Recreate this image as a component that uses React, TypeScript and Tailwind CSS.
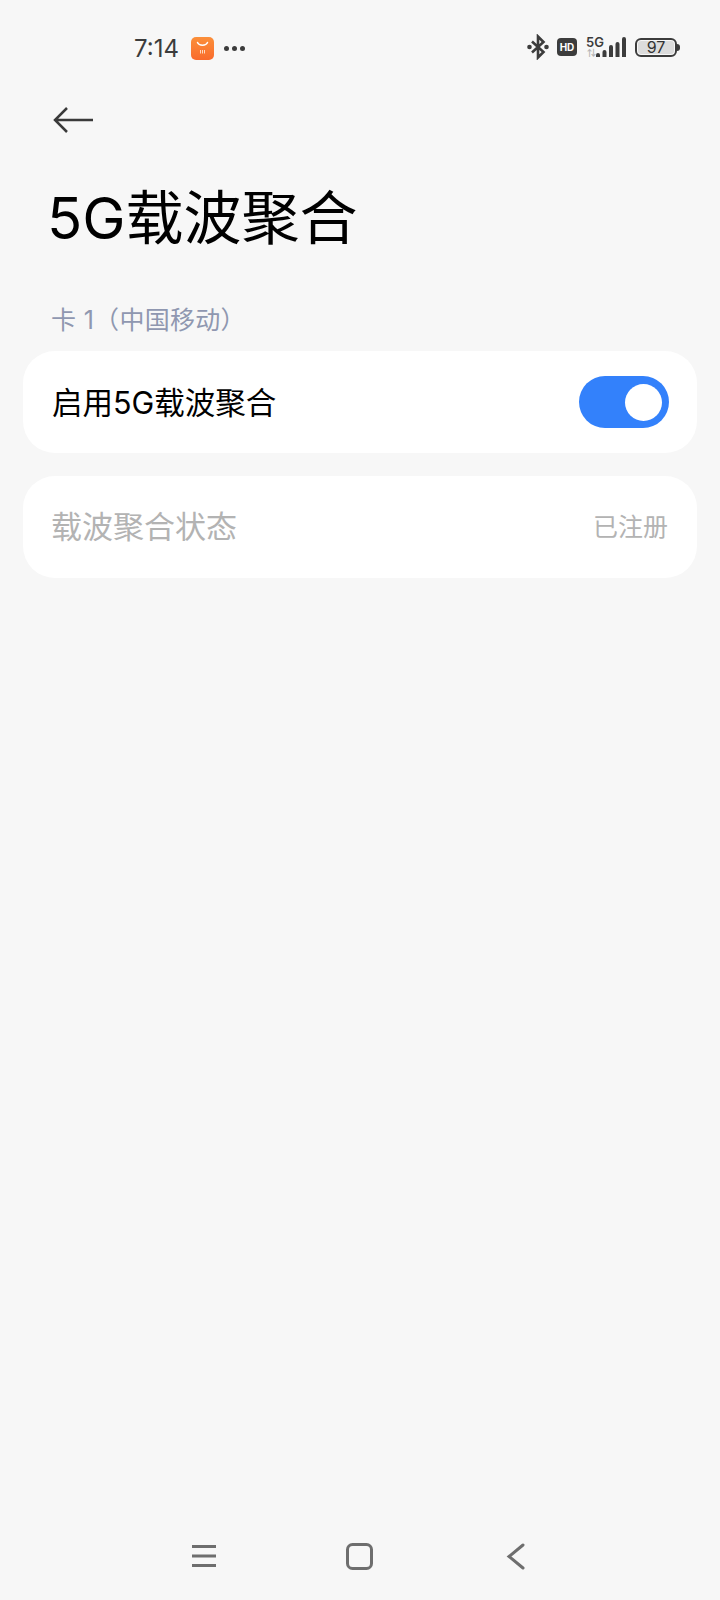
const AppIcon = () => (
  <div className="w-[23px] h-[23px] rounded-[5px] bg-gradient-to-b from-[#fb8f3a] to-[#f96a2c] flex flex-col items-center">
    <svg width="23" height="23" viewBox="0 0 23 23" fill="none">
      <path d="M6.5 5.5C8 9 15 9 16.5 5.5" stroke="#fff" strokeWidth="1.500" strokeLinecap="round" />
      <path d="M9.500 13v3.500M11.500 13v3.500M13.500 13v3.500" stroke="#ffe3cf" strokeWidth="0.900" />
    </svg>
  </div>
);

const StatusIcons = () => (
  <div className="flex items-center">
    <svg width="22" height="26" viewBox="0 0 22 26" fill="none" className="mr-[8px]">
      <path d="M5 7.500 16.500 18 11 23.500V2.500L16.500 8 5 18.500" stroke="#3c3c3c" strokeWidth="2.600" />
      <circle cx="2.500" cy="13" r="2.300" fill="#3c3c3c" />
      <circle cx="19.500" cy="13" r="2.300" fill="#3c3c3c" />
    </svg>
    <div className="w-[20px] h-[18px] rounded-[4px] bg-[#3c3c3c] text-white text-[10px] font-bold leading-[18px] text-center mr-[10px]">
      HD
    </div>
    <div className="relative w-[40px] h-[20px] mr-[8px]">
      <span className="absolute left-[-1px] top-[-2px] text-[13px] font-semibold leading-[14px] text-[#3c3c3c]">5G</span>
      <span className="absolute left-[0px] top-[11px] text-[9px] font-bold leading-[10px] text-[#b5b5b5]">⇅</span>
      <svg width="40" height="20" viewBox="0 0 40 20" className="absolute inset-0">
        <path d="M9 20v-2a1.500 1.500 0 0 1 4 0v2zM15.500 20v-5a2 2 0 0 1 4 0v5zM22 20V10a2 2 0 0 1 4 0v10zM28.500 20V7a2 2 0 0 1 4 0v13zM35 20V2a2 2 0 0 1 4 0v18z" fill="#3c3c3c" />
      </svg>
    </div>
    <div className="w-[42px] h-[19px] rounded-[6px] border-2 border-[#3c3c3c] p-px">
      <div className="w-[36px] h-[13px] rounded-[3px] bg-[#dcdcdc] text-[16px] leading-[13px] text-center text-[#333]">97</div>
    </div>
    <div className="w-[3px] h-[7px] rounded-r-sm bg-[#3c3c3c]" />
  </div>
);

const App = () => {
  return (
    <div
      className="w-[720px] h-[1600px] bg-[#f7f7f7] flex flex-col overflow-hidden"
      style={{ fontFamily: 'Inter, "Noto Sans CJK SC", sans-serif' }}
    >
      <header className="h-[106px] pl-[134px] pr-[40px] pt-[34px] flex items-start justify-between">
        <div className="flex items-center h-[28px]">
          <span className="w-[46px] text-[24px] leading-[28px] mt-[1px] text-[#3c3c3c]">7:14</span>
          <div className="ml-[11px]">
            <AppIcon />
          </div>
          <div className="flex items-center gap-[3px] ml-[10px]">
            <span className="w-[5px] h-[5px] rounded-full bg-[#3c3c3c]" />
            <span className="w-[5px] h-[5px] rounded-full bg-[#3c3c3c]" />
            <span className="w-[5px] h-[5px] rounded-full bg-[#3c3c3c]" />
          </div>
        </div>
        <StatusIcons />
      </header>

      <div className="pl-[53px]">
        <svg width="41" height="28" viewBox="0 0 41 28" fill="none" className="block">
          <path d="M40 14H2M14 2 2 14l12 12" stroke="#3a3a3a" strokeWidth="2.500" />
        </svg>
      </div>

      <h1 className="mt-[49px] pl-[47px] text-[58px] leading-[70px] font-normal text-black">5G载波聚合</h1>

      <p className="mt-[51px] pl-[51px] text-[25px] leading-[32px] tracking-[0.3px] text-[#8f97b0]">卡 1（中国移动）</p>

      <main className="mt-[15px] px-[23px] flex flex-col gap-[23px]">
        <div className="h-[102px] rounded-[32px] bg-white pl-[29px] pr-[28px] flex items-center justify-between">
          <span className="text-[30.500px] text-black pt-[1px]">启用5G载波聚合</span>
          <div className="w-[90px] h-[52px] rounded-full bg-[#3381fb] flex items-center justify-end pr-[7px]">
            <div className="w-[37px] h-[37px] rounded-full bg-white" />
          </div>
        </div>
        <div className="h-[102px] rounded-[32px] bg-white pl-[28px] pr-[29px] flex items-center justify-between">
          <span className="text-[31px] text-[#b3b3b3] pt-[1px]">载波聚合状态</span>
          <span className="text-[25px] text-[#b3b3b3] pt-[1px]">已注册</span>
        </div>
      </main>

      <nav className="mt-auto h-[57px] pb-[31px] flex items-start">
        <div className="ml-[191px] flex items-start">
          <svg width="26" height="26" viewBox="0 0 26 26" fill="none">
            <path d="M1 3.500h24M1 13h24M1 22.500h24" stroke="#6e6e6e" strokeWidth="3" />
          </svg>
          <svg width="27" height="27" viewBox="0 0 27 27" fill="none" className="ml-[129px]">
            <rect x="1.500" y="1.500" width="24" height="24" rx="5" stroke="#6e6e6e" strokeWidth="3" />
          </svg>
          <svg width="20" height="27" viewBox="0 0 20 27" fill="none" className="ml-[133px]">
            <path d="M17 2 3 13.500 17 25" stroke="#6e6e6e" strokeWidth="3" strokeLinecap="round" />
          </svg>
        </div>
      </nav>
    </div>
  );
};

export default App;
